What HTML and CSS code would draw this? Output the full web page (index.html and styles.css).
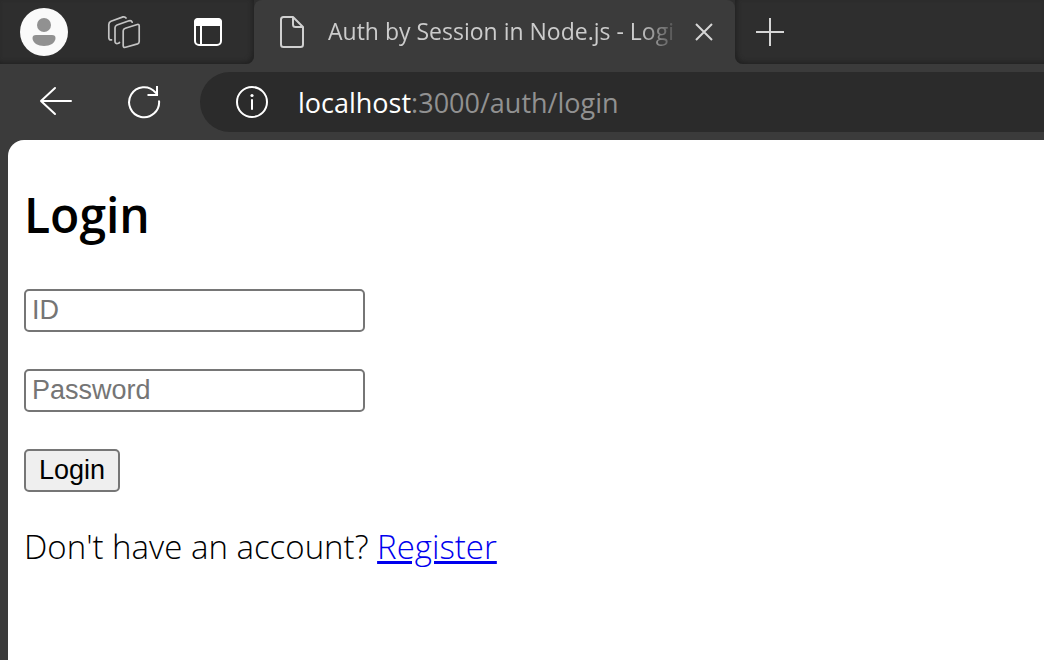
FILE: index.html
```
<!DOCTYPE html>
<html lang="en">
    <head>
        <meta charset="utf-8" />
        <meta name="viewport" content="width=device-width, initial-scale=1" />
        <title>Auth by Session in Node.js - Login</title>
        <link rel="stylesheet" href="styles.css">
    </head>

    <body>
        <div class="browser">
            <header class="tab-strip">
                <div class="strip-left">
                    <button class="icon-button" type="button" aria-label="Profile">
                        <svg width="48" height="48" viewBox="0 0 48 48">
                            <circle cx="24" cy="24" r="24" fill="#fafafa" />
                            <circle cx="24" cy="17" r="7" fill="#919191" />
                            <path d="M16 27H32Q35.500 27 35.500 30C35.500 35 30 38 24 38S12.500 35 12.500 30Q12.500 27 16 27Z" fill="#919191" />
                        </svg>
                    </button>
                    <button class="icon-button" type="button" aria-label="Workspaces">
                        <svg width="48" height="48" viewBox="0 0 48 48" fill="none" stroke="#c4c4c4" stroke-width="1.700" stroke-linecap="round" stroke-linejoin="round">
                            <path d="M25.300 20.200L37.300 16.500Q39.200 16 39.200 18V33.500Q39.200 35.300 37.600 35.900L25.600 39.300Q23.200 39.900 23.200 37.800V22.800Q23.200 20.900 25.300 20.200Z" />
                            <path d="M19.500 34.500L18.500 35.300Q15 36.300 15 33.500V19.800Q15 17.800 17 17L29 12.800Q31.500 12.200 32.200 14.200" />
                            <path d="M11.500 31.900Q8.800 32.300 8.800 29.500V16.500Q8.800 14.200 11 13.300L23 8.900Q25 8.400 26 10" />
                        </svg>
                    </button>
                    <button class="icon-button tab-actions" type="button" aria-label="Tab actions">
                        <svg width="48" height="48" viewBox="0 0 48 48" fill="none" stroke="#ffffff" stroke-width="2">
                            <rect x="11" y="11" width="26" height="26" rx="4" />
                            <path d="M17 18V37" />
                            <path d="M10 18V14Q10 10 14 10H34Q38 10 38 14V18Z" fill="#ffffff" stroke="none" />
                        </svg>
                    </button>
                </div>
                <div class="tab">
                    <svg class="tab-icon" width="24" height="32" viewBox="0 0 24 32" fill="none" stroke="#d0d0d0" stroke-width="2" stroke-linejoin="round">
                        <path d="M3.500 1H13L23 11V28.500Q23 31 20.500 31H3.500Q1 31 1 28.500V3.500Q1 1 3.500 1Z" />
                        <path d="M13 1V8.500Q13 11 15.500 11H23" />
                    </svg>
                    <span class="tab-title">Auth by Session in Node.js - Logi</span>
                    <button class="close-button" type="button" aria-label="Close tab">
                        <svg width="18" height="18" viewBox="0 0 18 18" fill="none" stroke="#d6d6d6" stroke-width="2">
                            <path d="M1 1L17 17M17 1L1 17" />
                        </svg>
                    </button>
                </div>
                <div class="strip-right">
                    <button class="icon-button" type="button" aria-label="New tab">
                        <svg width="28" height="28" viewBox="0 0 28 28" fill="none" stroke="#d6d6d6" stroke-width="2">
                            <path d="M14 0V28M0 14H28" />
                        </svg>
                    </button>
                </div>
            </header>

            <nav class="toolbar">
                <button class="icon-button" type="button" aria-label="Back">
                    <svg width="34" height="32" viewBox="0 0 34 32" fill="none" stroke="#ffffff" stroke-width="2" stroke-linecap="round" stroke-linejoin="round">
                        <path d="M32 15H2M16 2L2 15L16 28" />
                    </svg>
                </button>
                <button class="icon-button" type="button" aria-label="Refresh">
                    <svg width="34" height="34" viewBox="0 0 34 34" fill="none" stroke="#ffffff" stroke-width="2">
                        <path d="M32 15.500A15 15 0 1 1 28.500 7.500L30.500 10" />
                        <path d="M30 1V10H20.500" />
                    </svg>
                </button>
                <div class="address-bar">
                    <svg width="34" height="34" viewBox="0 0 34 34" fill="none" stroke="#ffffff" stroke-width="2">
                        <circle cx="17" cy="17" r="15" />
                        <path d="M17 15V24" stroke-linecap="round" />
                        <circle cx="17" cy="10.500" r="1.600" fill="#ffffff" stroke="none" />
                    </svg>
                    <div class="url"><span class="url-host">localhost</span>:3000/auth/login</div>
                </div>
            </nav>

            <main class="page">
                <h2>Login</h2>
                <form class="login-form" action="/auth/login" method="post">
                    <input type="text" name="username" placeholder="ID" aria-label="ID" />
                    <input type="password" name="pwd" placeholder="Password" aria-label="Password" />
                    <button class="login-button" type="submit">Login</button>
                </form>
                <p>Don't have an account? <a href="/auth/register">Register</a></p>
            </main>
        </div>
    </body>
</html>
```

FILE: styles.css
```
* {
    box-sizing: border-box;
}
body {
    margin: 0;
    font-family: "Open Sans", "Noto Sans", sans-serif;
}
button {
    font: inherit;
}
svg {
    display: block;
    flex: none;
}
.browser {
    display: flex;
    flex-direction: column;
    min-height: 100vh;
    background: #3b3b3b;
}

/* tab strip */
.tab-strip {
    display: flex;
    height: 64px;
    background: linear-gradient(#2e2e2e 50%, #3b3b3b 50%);
}
.strip-left,
.strip-right {
    display: flex;
    align-items: center;
    background: #2e2e2e;
}
.strip-left {
    gap: 32px;
    padding: 0 22px 0 20px;
    border-radius: 0 0 8px 0;
    box-shadow: inset -2px -2px 4px #222222;
}
.strip-right {
    flex: 1;
    padding: 0 11px;
    border-radius: 0 0 0 8px;
    box-shadow: inset 2px -2px 4px #222222;
}
.icon-button,
.close-button {
    display: flex;
    align-items: center;
    justify-content: center;
    padding: 0;
    border: none;
    background: none;
}
.icon-button {
    flex: none;
    width: 48px;
    height: 48px;
}
.tab-actions {
    margin-left: 4px;
}
.tab {
    display: flex;
    align-items: center;
    width: 481px;
    padding: 0 18px 0 26px;
    border-radius: 8px 8px 0 0;
    background: #3b3b3b;
}
.tab-title {
    flex: 1;
    margin: 0 14px 0 24px;
    padding-bottom: 2px;
    white-space: nowrap;
    font-size: 23px;
    color: #cccccc;
    mask-image: linear-gradient(to right, #000000 310px, transparent 354px);
}
.close-button {
    width: 26px;
    height: 26px;
}

/* toolbar */
.toolbar {
    display: flex;
    align-items: center;
    gap: 40px;
    padding: 8px 0 8px 32px;
}
.address-bar {
    display: flex;
    flex: 1;
    align-items: center;
    gap: 29px;
    height: 60px;
    margin-left: -8px;
    padding-left: 35px;
    border-radius: 30px 0 0 30px;
    background: #2b2b2b;
}
.url {
    font-size: 27px;
    color: #919191;
}
.url-host {
    color: #ffffff;
}

/* page */
.page {
    flex: 1;
    margin-left: 8px;
    padding: 40px 16px;
    border-radius: 16px 0 0 0;
    background: #ffffff;
}
.page h2 {
    margin: 0 0 39px;
    font-size: 48px;
    font-weight: 600;
    line-height: 70px;
}
.login-form {
    display: flex;
    flex-direction: column;
    align-items: flex-start;
    gap: 37px;
}
.login-form input,
.login-button {
    height: 43px;
    border: 2px solid #767676;
    border-radius: 5px;
    font-family: "Liberation Sans", Arial, sans-serif;
    font-size: 27px;
}
.login-form input {
    width: 341px;
    padding: 0 6px;
}
.login-form input::placeholder {
    color: #757575;
}
.login-button {
    padding: 0 13px;
    background: #efefef;
    color: #000000;
}
.page p {
    margin: 31px 0 0;
    font-size: 33px;
    font-weight: 300;
    line-height: 48px;
}
.page a {
    color: #0000ee;
}
```
